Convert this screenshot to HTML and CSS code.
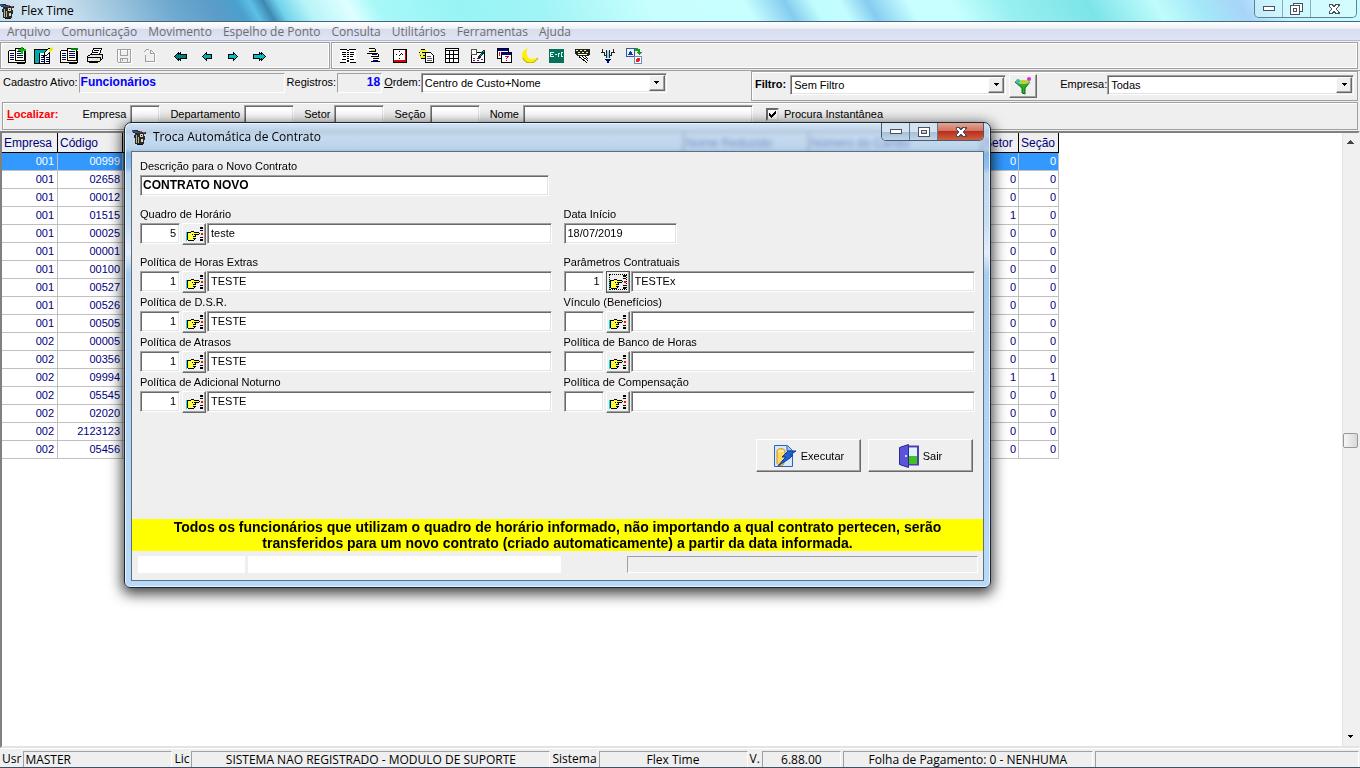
FILE: index.html
```
<!DOCTYPE html>
<html lang="pt-BR">
<head>
<meta charset="UTF-8">
<title>Flex Time</title>
<link rel="stylesheet" href="styles.css">
</head>
<body>

<!-- icones usados mais de uma vez -->
<svg class="defs" aria-hidden="true">
	<symbol id="app" viewBox="0 0 16 16">
		<path d="M1 1h5v1h3v1h5v2h-2v2h1v4h-1v4H3V9H2V6h1V4H1z" fill="#2b2b26"/>
		<path d="M0 1h2v1h3v1h4v1H3V3H0z" fill="#34509a"/>
		<path d="M4 6h1v8H4zM6 8h1v6H6z" fill="#b9b48a"/>
		<path d="M8 5h3v3H8zM9 10h2v3H9z" fill="#d6d6cc"/>
		<path d="M8 2h2v1H8zM11 3h2v1h-2z" fill="#c04848"/>
		<path d="M9 6h1v1H9zM5 15h6v1H5z" fill="#111"/>
	</symbol>
	<symbol id="sheets" viewBox="0 0 18 18">
		<path d="M1 4h7v11H1zM8 2h8v11H8z" fill="#ffffe0"/>
		<path d="M0 4h1v12H0zM1 3h6v1H1zM1 15h8v1H1zM7 1h9v1H7zM7 2h1v12H7zM16 2h1v12h-1zM8 13h8v1H8zM9 15h8v2H9zM17 4h1v12h-1z" fill="#000"/>
		<path d="M2 6h4v1H2zM2 8h4v1H2zM2 10h4v1H2zM2 12h4v1H2zM9 4h6v1H9zM9 6h6v1H9zM9 8h6v1H9zM9 10h6v1H9z" fill="#000080"/>
	</symbol>
	<symbol id="hand" viewBox="0 0 17 15">
		<path d="M0 5h1v9H0z" fill="#00e0f0"/>
		<path d="M2 6h3V5h3v1h5v2H9v4H7v1H2z" fill="#ffff40"/>
		<path d="M1 5h4v1H1zM5 4h3v1H5zM8 5h5v1H8zM13 6h1v1h-1zM8 7h5v1H8zM1 6h1v7H1zM2 13h6v1H2zM9 8h1v2H9zM7 9h2v1H7zM9 11h1v1H9zM7 11h2v1H7zM8 12h1v1H8zM6 7h1v1H6z" fill="#000"/>
		<path d="M14 0h3v2h-3zM14 3h3v1h-3zM14 10h3v1h-3zM14 12h3v2h-3z" fill="#000"/>
		<path d="M15 6h2v2h-2z" fill="#e11"/>
	</symbol>
	<symbol id="arrow1" viewBox="0 0 14 14">
		<path d="M2.500 7.500l4-4v2h5v4h-5v2z" fill="#00b4b4" stroke="#000"/>
	</symbol>
	<symbol id="arrow2" viewBox="0 0 14 14">
		<path d="M.5 7.500l4-4v2l2-2v2h6v4h-6v2l-2-2v2z" fill="#008080" stroke="#000"/>
	</symbol>
	<symbol id="arrow3" viewBox="0 0 14 14">
		<path d="M13.500 7.500l-4-4v2l-2-2v2h-6v4h6v2l2-2v2z" fill="#00c0c8" stroke="#000"/>
	</symbol>
	<symbol id="down" viewBox="0 0 7 4"><path d="M1 0h5v1H5v1H4v1H3V2H2V1H1z" fill="#000"/></symbol>
	<symbol id="close" viewBox="0 0 12 10">
		<path d="M1 .5h3l2 2 2-2h3v1L8.500 5 11 8.500v1H8l-2-2-2 2H1v-1L3.500 5 1 1.500z" fill="#fff" stroke="#4b4f60"/>
	</symbol>
	<symbol id="min" viewBox="0 0 12 5"><path d="M.5.5h11v4H.5z" fill="#fff" stroke="#4b4f60"/></symbol>
	<symbol id="max" viewBox="0 0 12 10">
		<path d="M.5.5h11v9H.5zM3.500 3.500h5v3h-5z" fill="#fff" fill-rule="evenodd" stroke="#4b4f60"/>
	</symbol>
</svg>

<header class="titlebar">
	<svg class="app-icon"><use href="#app"/></svg>
	<h1>Flex Time</h1>
	<div class="winbtns">
		<button type="button" aria-label="Minimizar"><svg width="12" height="5"><use href="#min"/></svg></button>
		<button type="button" aria-label="Restaurar"><svg width="13" height="12" viewBox="0 0 13 12"><path d="M3.500.5h9v8h-9z" fill="#fff" stroke="#4b4f60"/><path d="M.5 2.500h9v9h-9z" fill="#fff" stroke="#4b4f60"/><path d="M3.500 5.500h3v3h-3z" fill="none" stroke="#4b4f60"/></svg></button>
		<button type="button" class="wide" aria-label="Fechar"><svg width="12" height="10"><use href="#close"/></svg></button>
	</div>
</header>

<nav class="menu">
	<a href="#">Arquivo</a>
	<a href="#">Comunicação</a>
	<a href="#">Movimento</a>
	<a href="#">Espelho de Ponto</a>
	<a href="#">Consulta</a>
	<a href="#">Utilitários</a>
	<a href="#">Ferramentas</a>
	<a href="#">Ajuda</a>
</nav>

<div class="toolbars">
	<div class="toolbar">
		<button type="button" aria-label="Incluir"><svg width="18" height="18" viewBox="0 0 18 18"><use href="#sheets"/><path d="M13 0h2v2h3v2h-3v3h-2V4h-3V2h3z" fill="#0b0"/></svg></button>
		<button type="button" aria-label="Alterar"><svg width="19" height="18" viewBox="0 0 19 18"><path d="M.5 2.500h15v14H.5z" fill="#fff" stroke="#000"/><path d="M1 3h14v3H1zM1 6h4v10H1z" fill="#0aa"/><path d="M7 8h3v1H7zM7 10h3v1H7zM7 12h3v1H7zM7 14h3v1H7zM12 10h3v1h-3zM12 12h3v1h-3zM12 14h3v1h-3z" fill="#000080"/><path d="M10 6h1v10h-1zM5 6h1v10H5z" fill="#000"/><path d="M10 9l1-4 4-4 3 2-5 5z" fill="#ffd" stroke="#000"/><path d="M14 3l3-3 2 2-3 3z" fill="#ee0"/></svg></button>
		<button type="button" aria-label="Excluir"><svg width="18" height="18" viewBox="0 0 18 18"><use href="#sheets"/><path d="M11 1h7v2h-7z" fill="#080"/></svg></button>
		<button type="button" aria-label="Imprimir"><svg width="18" height="16" viewBox="0 0 18 16"><path d="M5.500 6.500l2-6h8l-2 6z" fill="#fff" stroke="#000"/><path d="M8 2h5v1H8zM7 4h5v1H7z" fill="#000"/><path d="M1.500 8.500l3-2h12v4l-3 3h-12z" fill="#e8e8e8" stroke="#000"/><path d="M2 9h12v1H2zM3 13h10l-1 2H3zM14 9h1v4h-1z" fill="#000"/><path d="M10 11h2v1h-2z" fill="#ee0"/></svg></button>
		<button type="button" class="sep1" disabled aria-label="Gravar"><svg width="16" height="16" viewBox="0 0 16 16"><path d="M2.500 2.500h13v13h-12l-1-1z" fill="none" stroke="#fff"/><path d="M1.500 1.500h13v13h-12l-1-1zM4.500 1.500v6h7v-6M4.500 14v-4h7v4M6.500 11v2" fill="none" stroke="#a0a0a0"/></svg></button>
		<button type="button" disabled aria-label="Cancelar"><svg width="16" height="16" viewBox="0 0 16 16"><path d="M4.500 14.500h9v-8h-3v-4M11 2l3 4" fill="none" stroke="#fff"/><path d="M3.500 7v6.500h9v-8h-4V1.500M9 2l3 3M2 4l3-3M5 1.500h2" fill="none" stroke="#a0a0a0"/></svg></button>
		<button type="button" class="sep2" aria-label="Primeiro"><svg width="14" height="14"><use href="#arrow2"/></svg></button>
		<button type="button" aria-label="Anterior"><svg width="14" height="14"><use href="#arrow1"/></svg></button>
		<button type="button" aria-label="Próximo"><svg width="14" height="14" viewBox="0 0 14 14"><path d="M11.500 7.500l-4-4v2h-5v4h5v2z" fill="#00c0c8" stroke="#000"/></svg></button>
		<button type="button" aria-label="Último"><svg width="14" height="14"><use href="#arrow3"/></svg></button>
	</div>
	<div class="toolbar grow">
		<button type="button" aria-label="Livro"><svg width="16" height="16" viewBox="0 0 16 16"><path d="M0 1h16v14H0z" fill="#fff"/><path d="M0 1h7v1H0zM9 1h7v1H9zM0 14h6v1H0zM10 14h6v1h-6zM7 2h2v1H7zM7 4h2v1H7zM7 6h2v1H7zM7 8h2v1H7zM7 10h2v1H7zM7 12h2v2H7zM2 4h4v1H2zM2 6h4v1H2zM3 8h3v1H3zM2 11h4v1H2zM10 4h4v1h-4zM10 6h4v1h-4zM10 8h3v1h-3zM10 11h4v1h-4z" fill="#000"/></svg></button>
		<button type="button" aria-label="Organograma"><svg width="14" height="15" viewBox="0 0 14 15"><path d="M2 1h7v2H2zM4 6h8v2H4zM5 11h8v2H5z" fill="#fff"/><path d="M2 0h6v1H2zM2 3h7v1H2zM8 1h1v2H8zM0 5h4v1H0zM4 5h7v1H4zM4 8h8v1H4zM11 6h1v2h-1zM6 10h6v1H6zM4 13h9v1H4z" fill="#000"/><path d="M4 2h4v1H4z" fill="#dd0"/><path d="M5 6h5v1H5zM6 12h5v1H6z" fill="#00a"/></svg></button>
		<button type="button" aria-label="Relógio"><svg width="14" height="14" viewBox="0 0 14 14"><path d="M0 0h14v14H0z" fill="#000"/><path d="M1 1h11v10H1z" fill="#fff"/><path d="M1 11h12v2H1zM12 1h1v12h-1z" fill="#d00"/><path d="M6 2h1v1H6zM3 5h1v1H3zM9 5h1v1H9zM6 9h1v1H6zM8 4h1v1H8zM7 5h1v1H7zM6 6h1v1H6z" fill="#000"/></svg></button>
		<button type="button" aria-label="Documentos"><svg width="15" height="14" viewBox="0 0 15 14"><path d="M1 1h7v2H1zM0 4h9v2H0zM1 7h6v2H1z" fill="#ee2"/><path d="M2 0h4v1H2zM0 3h1v1H0zM3 3h4v1H3zM1 6h1v1H1zM4 6h3v1H4zM2 9h4v1H2z" fill="#000"/><path d="M6.500 3.500h5l3 3v7h-8z" fill="#fff" stroke="#000"/><path d="M8 7h4v1H8zM8 9h5v1H8zM8 11h5v1H8z" fill="#555"/></svg></button>
		<button type="button" aria-label="Tabela"><svg width="14" height="15" viewBox="0 0 14 15"><path d="M0 0h14v15H0z" fill="#000"/><path d="M1 1h12v1H1zM1 3h3v3H1zM5 3h3v3H5zM9 3h4v3H9zM1 7h3v3H1zM5 7h3v3H5zM9 7h4v3H9zM1 11h3v3H1zM5 11h3v3H5zM9 11h4v3H9z" fill="#fff"/></svg></button>
		<button type="button" aria-label="Marcações"><svg width="17" height="16" viewBox="0 0 17 16"><path d="M1.500 4.500h13v10h-13z" fill="#fff" stroke="#000"/><circle cx="4" cy="4" r="3" fill="#fff" stroke="#555"/><path d="M3 10h2v1H3zM7 10h1v1H7zM3 12h2v1H3zM7 12h2v1H7zM11 11h2v1h-2z" fill="#808"/><path d="M8 10l6-8 1 1-6 8z" fill="#0bb" stroke="#133"/></svg></button>
		<button type="button" aria-label="Calendário"><svg width="15" height="15" viewBox="0 0 15 15"><path d="M.5.5h11v10H.5z" fill="#fff" stroke="#000"/><path d="M1 1h10v2H1z" fill="#0000a0"/><path d="M4.500 4.500h10v10h-10z" fill="#fff" stroke="#000"/><path d="M5 5h9v2H5z" fill="#0000a0"/><path d="M8 8h4v1h-1v1h-1v1H9v-1h1V9H8zM9 12h1v1H9zM2 4h1v4H2z" fill="#e00"/></svg></button>
		<button type="button" aria-label="Noturno"><svg class="smooth" width="16" height="15" viewBox="0 0 16 15"><path d="M6 0C3 3 4 12 11 11c2 0 4-1 5-2-1 4-5 6-8 6C3 15 0 12 0 8c0-4 3-7 6-8z" fill="#fff000"/><path d="M1 10c1 3 4 5 7 5 4 0 6-2 8-5" fill="none" stroke="#a8a000"/></svg></button>
		<button type="button" aria-label="Exportar"><svg width="15" height="14" viewBox="0 0 15 14"><path d="M0 0h15v14H0z" fill="#087058"/><path d="M1 3h4v1H2v1h2v1H2v1h3v1H1zM6 5h2v1H6zM9 4h1v4H9zM10 4h1v1h-1zM12 3h2v1h-1v3h1v1h-2z" fill="#cfe"/></svg></button>
		<button type="button" aria-label="Coletor"><svg width="15" height="14" viewBox="0 0 15 14"><path d="M0 0h15v5l-2 2H2L0 5z" fill="#222"/><path d="M1 1h2v1H1zM5 1h2v1H5zM9 1h2v1H9zM3 3h2v1H3zM7 3h2v1H7zM11 3h2v1h-2z" fill="#ff8"/><path d="M3 5h9v1H3zM4 7l8 6 2-6z" fill="#fff"/><path d="M4 7.500l8 6M7 7.500l6 4M10 7.500l3 2" fill="none" stroke="#000"/></svg></button>
		<button type="button" aria-label="Distribuir"><svg width="14" height="16" viewBox="0 0 14 16"><path d="M1.500 1v4M0 4.500h4M3.500 5v3M12.500 1v4M14 4.500h-4M10.500 5v3M3 7.500h2M9 7.500h2" fill="none" stroke="#222"/><path d="M5 2h1v8H5zM8 2h1v8H8z" fill="#222"/><path d="M6 3h2v7H6z" fill="#7df"/><path d="M4 11h6v1H9v1H8v2H6v-2H5v-1H4z" fill="#000080"/></svg></button>
		<button type="button" aria-label="Importar"><svg width="16" height="16" viewBox="0 0 16 16"><path d="M.5.5h8v8h-8z" fill="#eaf2ff" stroke="#35589c"/><path d="M2 7l2-4h1l2 4z" fill="#123a9a"/><path d="M8.500 8.500h7v7h-7z" fill="#fff" stroke="#6d8cc0"/><circle cx="12" cy="12" r="2" fill="#e22"/><path d="M9 0h3v1h2v3h2l-3 3-3-3h2V3H9z" fill="#1a9a1a"/></svg></button>
	</div>
</div>

<div class="cadastro">
	<div class="active">
		<span class="cap">Cadastro Ativo:</span>
		<output class="sunk blue w-ativo">Funcionários</output>
		<span class="cap">Registros:</span>
		<output class="sunk blue right w-reg">18</output>
		<label for="ordem"><u>O</u>rdem:</label>
		<span class="combo w-ordem"><select id="ordem"><option>Centro de Custo+Nome</option></select><i><svg width="7" height="4"><use href="#down"/></svg></i></span>
	</div>
	<div class="filter">
		<label for="filtro"><b>Filtro:</b></label>
		<span class="combo w-filtro"><select id="filtro"><option>Sem Filtro</option></select><i><svg width="7" height="4"><use href="#down"/></svg></i></span>
		<button type="button" class="funnel" aria-label="Filtrar"><svg class="smooth" width="18" height="18" viewBox="0 0 18 18"><path d="M1 5h15l-5 6v6l-3-1v-5z" fill="#2bb02b" stroke="#0b6b14"/><ellipse cx="9" cy="5" rx="7" ry="2" fill="#8de04e"/><circle cx="4" cy="4" r="2" fill="#3ab0d8"/><circle cx="10" cy="5" r="2" fill="#e8c020"/><circle cx="15" cy="2" r="2" fill="#e02ad0"/></svg></button>
		<label for="empresa" class="push">Empresa:</label>
		<span class="combo grow"><select id="empresa"><option>Todas</option></select><i><svg width="7" height="4"><use href="#down"/></svg></i></span>
	</div>
</div>

<form class="search">
	<b class="red"><u>L</u>ocalizar:</b>
	<label for="l1">Empresa</label><input type="text" id="l1" class="s">
	<label for="l2">Departamento</label><input type="text" id="l2">
	<label for="l3">Setor</label><input type="text" id="l3">
	<label for="l4">Seção</label><input type="text" id="l4">
	<label for="l5">Nome</label><input type="text" id="l5" class="l">
	<label class="check"><input type="checkbox" checked><svg width="7" height="7" viewBox="0 0 7 7"><path d="M0 2h1v1h1v1h1V3h1V2h1V1h1V0h1v3H6v1H5v1H4v1H3v1H2V6H1V5H0z" fill="#000"/></svg>Procura Instantânea</label>
</form>

<main class="grid">
	<div class="sheet">
		<table>
			<colgroup><col class="c1"><col class="c2"><col class="c3"><col class="c4"><col class="c5"><col class="c6"><col class="c7"></colgroup>
			<thead>
				<tr><th>Empresa</th><th>Código</th><th></th><th>Nome Reduzido</th><th>Número do Cartão</th><th>Setor</th><th>Seção</th></tr>
			</thead>
			<tbody>
				<tr class="sel"><td>001</td><td>00999</td><td></td><td></td><td></td><td>0</td><td>0</td></tr>
				<tr><td>001</td><td>02658</td><td></td><td></td><td></td><td>0</td><td>0</td></tr>
				<tr><td>001</td><td>00012</td><td></td><td></td><td></td><td>0</td><td>0</td></tr>
				<tr><td>001</td><td>01515</td><td></td><td></td><td></td><td>1</td><td>0</td></tr>
				<tr><td>001</td><td>00025</td><td></td><td></td><td></td><td>0</td><td>0</td></tr>
				<tr><td>001</td><td>00001</td><td></td><td></td><td></td><td>0</td><td>0</td></tr>
				<tr><td>001</td><td>00100</td><td></td><td></td><td></td><td>0</td><td>0</td></tr>
				<tr><td>001</td><td>00527</td><td></td><td></td><td></td><td>0</td><td>0</td></tr>
				<tr><td>001</td><td>00526</td><td></td><td></td><td></td><td>0</td><td>0</td></tr>
				<tr><td>001</td><td>00505</td><td></td><td></td><td></td><td>0</td><td>0</td></tr>
				<tr><td>002</td><td>00005</td><td></td><td></td><td></td><td>0</td><td>0</td></tr>
				<tr><td>002</td><td>00356</td><td></td><td></td><td></td><td>0</td><td>0</td></tr>
				<tr><td>002</td><td>09994</td><td></td><td></td><td></td><td>1</td><td>1</td></tr>
				<tr><td>002</td><td>05545</td><td></td><td></td><td></td><td>0</td><td>0</td></tr>
				<tr><td>002</td><td>02020</td><td></td><td></td><td></td><td>0</td><td>0</td></tr>
				<tr><td>002</td><td>2123123</td><td></td><td></td><td></td><td>0</td><td>0</td></tr>
				<tr><td>002</td><td>05456</td><td></td><td></td><td></td><td>0</td><td>0</td></tr>
			</tbody>
		</table>
	</div>
	<div class="scroll">
		<svg width="7" height="4" viewBox="0 0 7 4"><path d="M3 0h1v1h1v1h1v1h1v1H0V3h1V2h1V1h1z" fill="#444"/></svg>
		<span class="thumb"></span>
		<svg width="7" height="4"><use href="#down"/></svg>
	</div>
</main>

<footer class="status">
	<span>Usr</span><span class="cell usr">MASTER</span>
	<span>Lic</span><span class="cell lic">SISTEMA NAO REGISTRADO - MODULO DE SUPORTE</span>
	<span>Sistema</span><span class="cell sis">Flex Time</span>
	<span>V.</span><span class="cell ver">6.88.00</span>
	<span class="cell fol">Folha de Pagamento: 0 - NENHUMA</span>
	<span class="cell grow"></span>
</footer>

<section class="dialog" role="dialog" aria-labelledby="dlgTitle">
	<div class="dlg-title">
		<svg class="app-icon"><use href="#app"/></svg>
		<h2 id="dlgTitle">Troca Automática de Contrato</h2>
		<div class="winbtns">
			<button type="button" aria-label="Minimizar"><svg width="12" height="5"><use href="#min"/></svg></button>
			<button type="button" aria-label="Maximizar"><svg width="12" height="10"><use href="#max"/></svg></button>
			<button type="button" class="wide close" aria-label="Fechar"><svg width="12" height="10"><use href="#close"/></svg></button>
		</div>
	</div>
	<form class="dlg-body">
		<div class="fields">
			<div class="field gap">
				<label for="desc">Descrição para o Novo Contrato</label>
				<div class="line"><input type="text" id="desc" class="desc" value="CONTRATO NOVO"></div>
			</div>
			<div class="field gap"></div>
			<div class="field gap">
				<label for="quadro">Quadro de Horário</label>
				<div class="line"><input type="text" id="quadro" class="num" value="5"><button type="button" class="pick" aria-label="Procurar quadro"><svg width="17" height="15"><use href="#hand"/></svg></button><input type="text" class="name" aria-label="Nome do quadro" value="teste"></div>
			</div>
			<div class="field gap">
				<label for="data">Data Início</label>
				<div class="line"><input type="text" id="data" class="date" value="18/07/2019"></div>
			</div>
			<div class="field">
				<label for="extras">Política de Horas Extras</label>
				<div class="line"><input type="text" id="extras" class="num" value="1"><button type="button" class="pick" aria-label="Procurar horas extras"><svg width="17" height="15"><use href="#hand"/></svg></button><input type="text" class="name" aria-label="Nome horas extras" value="TESTE"></div>
			</div>
			<div class="field">
				<label for="param">Parâmetros Contratuais</label>
				<div class="line"><input type="text" id="param" class="num" value="1"><button type="button" class="pick active-pick" aria-label="Procurar parâmetros"><svg width="17" height="15"><use href="#hand"/></svg></button><input type="text" class="name" aria-label="Nome parâmetros" value="TESTEx"></div>
			</div>
			<div class="field">
				<label for="dsr">Política de D.S.R.</label>
				<div class="line"><input type="text" id="dsr" class="num" value="1"><button type="button" class="pick" aria-label="Procurar D.S.R."><svg width="17" height="15"><use href="#hand"/></svg></button><input type="text" class="name" aria-label="Nome D.S.R." value="TESTE"></div>
			</div>
			<div class="field">
				<label for="vinc">Vínculo (Benefícios)</label>
				<div class="line"><input type="text" id="vinc" class="num"><button type="button" class="pick" aria-label="Procurar vínculo"><svg width="17" height="15"><use href="#hand"/></svg></button><input type="text" class="name" aria-label="Nome vínculo"></div>
			</div>
			<div class="field">
				<label for="atrasos">Política de Atrasos</label>
				<div class="line"><input type="text" id="atrasos" class="num" value="1"><button type="button" class="pick" aria-label="Procurar atrasos"><svg width="17" height="15"><use href="#hand"/></svg></button><input type="text" class="name" aria-label="Nome atrasos" value="TESTE"></div>
			</div>
			<div class="field">
				<label for="banco">Política de Banco de Horas</label>
				<div class="line"><input type="text" id="banco" class="num"><button type="button" class="pick" aria-label="Procurar banco de horas"><svg width="17" height="15"><use href="#hand"/></svg></button><input type="text" class="name" aria-label="Nome banco de horas"></div>
			</div>
			<div class="field">
				<label for="adic">Política de Adicional Noturno</label>
				<div class="line"><input type="text" id="adic" class="num" value="1"><button type="button" class="pick" aria-label="Procurar adicional"><svg width="17" height="15"><use href="#hand"/></svg></button><input type="text" class="name" aria-label="Nome adicional" value="TESTE"></div>
			</div>
			<div class="field">
				<label for="comp">Política de Compensação</label>
				<div class="line"><input type="text" id="comp" class="num"><button type="button" class="pick" aria-label="Procurar compensação"><svg width="17" height="15"><use href="#hand"/></svg></button><input type="text" class="name" aria-label="Nome compensação"></div>
			</div>
		</div>
		<div class="actions">
			<button type="button" class="btn"><svg class="smooth" width="24" height="24" viewBox="0 0 24 24"><path d="M1.500 1.500h13l5 5v16h-18z" fill="#d5e8ff" stroke="#2e64b8"/><path d="M14 2v5h5" fill="#9cc6f5" stroke="#2e64b8"/><path d="M4 7c0-3 8-3 8 0v10l-2 4c-2 1-6 0-6-2z" fill="#ffd860" stroke="#d09010"/><ellipse cx="8" cy="7" rx="3" ry="1" fill="#fff0a0"/><path d="M5 22l8-9 2 2z" fill="#f0b020"/><path d="M23 7l-8 0-6 6h4l-3 3-5 6 12-8 3-3h-3z" fill="#1c62d8" stroke="#0c3c94"/></svg>Executar</button>
			<button type="button" class="btn"><svg class="smooth" width="20" height="24" viewBox="0 0 20 24"><path d="M9 2.500h10v18H9z" fill="#fff" stroke="#4a42b0" stroke-width="2"/><path d="M10 12l8 0v8h-8z" fill="#44c020"/><path d="M10 4h8v8h-8z" fill="#dff3ff"/><path d="M.5 3.500l9-3v23l-9-3z" fill="#5c54d8" stroke="#2c2890"/><path d="M6 12h2M7 11v2" stroke="#fff"/></svg>Sair</button>
		</div>
		<p class="warn">Todos os funcionários que utilizam o quadro de horário informado, não importando a qual contrato pertecen, serão transferidos para um novo contrato (criado automaticamente) a partir da data informada.</p>
		<div class="foot"><span class="f1"></span><span class="f2"></span><span class="f3"></span></div>
	</form>
</section>

</body>
</html>
```

FILE: styles.css
```
* { padding: 0; margin: 0; box-sizing: border-box; }
html, body { height: 100%; overflow: hidden; }
body { display: flex; flex-direction: column; background: #efefef; border-bottom: 1px solid #3d5068; font: 11px/16px "Liberation Sans", Arial, sans-serif; color: #000; }
button, input, select { font: inherit; color: inherit; border-radius: 0; }
svg { display: block; flex: none; shape-rendering: crispEdges; }
svg.smooth { shape-rendering: auto; }
.defs { position: absolute; width: 0; height: 0; }
.grow { flex: 1; }
.app-icon { width: 16px; height: 16px; }

/* janela principal */
.titlebar { display: flex; height: 22px; border-bottom: 1px solid #46657f; align-items: center;
	background: linear-gradient(60deg, #c4dcec 0, #d8e8f4 4%, #a8cce2 8%, #6fa9d0 13%, #5c9cc8 16%, #4aa0cc 18%, #5cc0e4 19%, #3f88b4 20%, #70d4ec 21%, #b8f4f8 23%, #e0ffff 26%, #a8f8f8 28%, #98f4f4 34%, #a0f4f6 40%, #c8fefe 48%, #c8ffff 55%, #84ccee 58%, #c0fcfe 60%, #c4fdfe 62%, #86ccf0 64%, #c8ffff 67%, #c8ffff 70%, #98f0f0 74%, #7ce4e8 80%, #c0fcfc 85%, #a4e8f8 88%, #a8d4f8 91%, #c0f4ff 94%, #c8fcff 100%); }
.titlebar h1, .dlg-title h2 { font: 12px/18px "Open Sans", "Noto Sans", sans-serif; margin-left: 5px; }
.winbtns { display: flex; align-self: flex-start; margin-left: auto; border: 1px solid #5f8194; border-top: 0; border-radius: 0 0 5px 5px; overflow: hidden; }
.winbtns button { width: 28px; height: 17px; display: flex; align-items: center; justify-content: center; border: 0; border-right: 1px solid #86aebb; background: rgba(230, 255, 255, .4); }
.winbtns .wide { width: 45px; border-right: 0; }
.titlebar .winbtns { margin-right: 3px; }
.menu { display: flex; gap: 11px; height: 19px; margin-bottom: 1px; padding-left: 7px; border-bottom: 1px solid #b4b8c8; font: 12px/19px "Open Sans", "Noto Sans", sans-serif; background: linear-gradient(#fff 0, #eff1f8 35%, #d8ddee 40%, #dfe4f6 100%); }
.menu a { color: #6d6d6d; text-decoration: none; }

.toolbars { display: flex; height: 27px; margin-bottom: 1px; padding: 0 1px 0 0; }
.toolbar { display: flex; padding: 0 3px; border: 1px solid #a0a0a0; box-shadow: inset 1px 1px #fff, inset -1px -1px #fff; margin-right: 1px; align-items: center; }
.toolbar:first-child { padding-right: 57px; }
.toolbar button { width: 26px; height: 24px; display: flex; align-items: center; justify-content: center; border: 0; background: none; }
.toolbar .sep1 { margin-left: 3px; }
.toolbar .sep2 { margin-left: 5px; }

.cadastro { display: flex; height: 32px; border-top: 1px solid #a0a0a0; padding-right: 2px; justify-content: space-between; }
.active { display: flex; align-items: flex-start; padding: 2px 0 0 3px; line-height: 18px; }
.active .cap { margin-right: 1px; }
.sunk { display: block; height: 20px; padding: 0 1px; line-height: 16px; border: 1px solid #a0a0a0; border-right-color: #fff; border-bottom-color: #fff; margin-right: 2px; }
.blue { color: #00f; font-weight: bold; font-size: 12px; }
.right { text-align: right; }
.w-ativo { width: 206px; }
.w-reg { width: 45px; }
.w-ordem { width: 246px; }
.w-filtro { width: 216px; }
.filter { display: flex; width: 607px; height: 30px; padding: 3px; align-items: flex-start; border: 1px solid #a0a0a0; box-shadow: inset 1px 1px #fff; line-height: 18px; }
.filter label { margin-right: 4px; }
.filter .push { margin: 0 0 0 23px; }
.combo, .search > input, .line input { background: #fff; border: 1px solid; border-color: #a0a0a0 #fff #fff #a0a0a0; box-shadow: inset 1px 1px #696969, inset -1px -1px #e3e3e3; outline: 0; }
.combo { position: relative; display: block; height: 20px; padding: 1px; }
.combo select { width: 100%; height: 16px; line-height: 16px; padding-left: 2px; appearance: none; border: 0; background: none; outline: 0; display: block; }
.combo i { position: absolute; top: 1px; right: 1px; width: 16px; height: 16px; display: flex; align-items: center; justify-content: center; background: #efefef; border: 1px solid; border-color: #fff #696969 #696969 #fff; box-shadow: inset -1px -1px #a0a0a0; pointer-events: none; }
.funnel { width: 28px; height: 24px; margin: -1px 0 0 3px; display: flex; align-items: center; justify-content: center; background: #efefef; border: 1px solid; border-color: #fff #696969 #696969 #fff; box-shadow: inset -1px -1px #a0a0a0; }

.search { display: flex; height: 28px; margin: 0 2px; padding: 2px 4px 0; border: 1px solid #a0a0a0; box-shadow: inset 1px 1px #fff; line-height: 18px; }
.search .red { color: #f00; margin-right: 14px; }
.search label { margin: 0 4px 0 10px; }
.search > input { width: 50px; height: 20px; }
.search > .s { width: 30px; }
.search > .l { width: 230px; }
.search .check { position: relative; display: flex; align-items: center; gap: 5px; margin-left: 13px; height: 18px; }
.check input { appearance: none; width: 13px; height: 13px; background: #fff; border: 2px solid; border-color: #696969 #e3e3e3 #e3e3e3 #696969; }
.check svg { position: absolute; left: 3px; top: 6px; }

/* grade de funcionarios */
.grid { flex: 1; display: flex; min-height: 0; margin-top: 1px; border: 2px solid; border-color: #808080 #efefef #e3e3e3 #808080; background: #fff; }
.sheet { flex: 1; overflow: hidden; }
table { table-layout: fixed; width: 1057px; border-collapse: separate; border-spacing: 0; color: navy; }
.c1 { width: 56px; }
.c2 { width: 65px; }
.c3 { width: 561px; }
.c4 { width: 125px; }
.c5 { width: 173px; }
.c6 { width: 37px; }
.c7 { width: 40px; }
th { height: 20px; padding: 0 2px; font-size: 12px; font-weight: normal; text-align: left; white-space: nowrap; background: #efefef; border-right: 1px solid #000; border-bottom: 1px solid #000; }
td { height: 18px; line-height: 17px; padding-right: 2px; text-align: right; border-right: 1px solid #c0c0c0; border-bottom: 1px solid #c0c0c0; }
td:first-child { padding-right: 3px; }
.sel td { background: #3399ff; color: #fff; }
.scroll { width: 16px; display: flex; flex-direction: column; align-items: center; padding: 7px 0; background: #f0f0f0; border-left: 1px solid #e3e3e3; }
.thumb { width: 15px; height: 15px; margin: 289px 0 auto; border: 1px solid #979797; border-radius: 2px; background: linear-gradient(90deg, #f6f6f6, #d8d8d8); }

.status { display: flex; height: 19px; padding: 2px 1px 0 2px; gap: 2px; font: 12px/15px "Open Sans", "Noto Sans", sans-serif; border-top: 1px solid #fff; white-space: nowrap; }
.cell { height: 17px; padding: 0 1px; border-left: 1px solid #a0a0a0; border-top: 1px solid #a0a0a0; border-right: 1px solid #fff; text-align: center; }
.usr { width: 149px; text-align: left; }
.lic { width: 359px; }
.sis { width: 149px; }
.ver { width: 79px; }
.fol { width: 250px; }

/* dialogo */
.dialog { position: absolute; left: 124px; top: 122px; width: 867px; padding: 0 6px 6px; border: 1px solid #1c2733; border-radius: 7px 7px 6px 6px; background: linear-gradient(rgba(196, 220, 244, .75), rgba(160, 196, 230, .7) 30px, #c8def2 100px, #e4eefa 130px, #a9cdf0 150px, #b9d9f8 100%); backdrop-filter: blur(2px); box-shadow: inset 0 0 0 1px #e8f3fd, 0 4px 14px 2px rgba(0, 0, 0, .75); }
.dlg-title { display: flex; height: 28px; padding-left: 1px; align-items: center; }
.dlg-title .winbtns { margin-right: 0; border-color: #4c5a6c; }
.dlg-title .winbtns button { background: linear-gradient(#d5e3f1 50%, #a5bdd6 50%, #c0d6ec); border-color: #66788c; }
.dlg-title .winbtns .close { background: linear-gradient(#e2a695 0, #d4705e 48%, #b8301c 50%, #cf6044 100%); }
.dlg-body { background: #efefef; border: 1px solid #5d6f82; padding: 7px 0; }
.fields { display: grid; grid-template-columns: 1fr 1fr; column-gap: 12px; row-gap: 3px; padding: 0 8px; }
.field { height: 37px; }
.gap { margin-bottom: 8px; }
.field label { display: block; height: 16px; line-height: 14px; }
.line { display: flex; height: 21px; align-items: flex-start; }
.line input { height: 21px; padding: 0 3px 2px; }
.line .num { width: 40px; text-align: right; }
.line .name { flex: 1; min-width: 0; }
.line .date { width: 113px; }
.line .desc { width: 409px; font-size: 12px; font-weight: bold; padding-left: 2px; }
.pick { width: 24px; height: 22px; margin: 0 1px 0 2px; display: flex; align-items: center; justify-content: center; background: #efefef; border: 1px solid; border-color: #fff #696969 #696969 #fff; box-shadow: inset -1px -1px #a0a0a0; }
.active-pick { border-color: #555; outline: 1px dotted #000; outline-offset: -4px; }
.actions { display: flex; justify-content: flex-end; gap: 7px; margin: 27px 10px 47px; }
.btn { width: 105px; height: 33px; display: flex; align-items: center; justify-content: center; gap: 4px; background: #efefef; border: 1px solid; border-color: #fff #696969 #696969 #fff; box-shadow: inset -1px -1px #a0a0a0; }
.warn { padding: 0 20px; background: #ff0; font-size: 14px; font-weight: bold; line-height: 16px; text-align: center; }
.foot { display: flex; padding: 5px 5px 0 6px; }
.foot span { height: 17px; background: #fff; }
.foot .f1 { width: 107px; margin-right: 3px; }
.foot .f2 { width: 313px; margin-right: 66px; }
.foot .f3 { flex: 1; background: none; border: 1px solid #a0a0a0; border-right-color: #fff; border-bottom-color: #fff; }
```
